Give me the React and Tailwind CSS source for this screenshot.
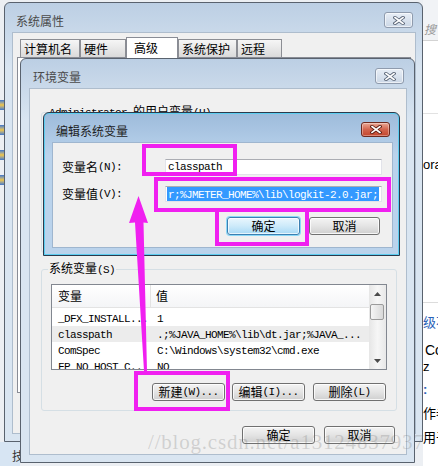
import React from 'react';

const Mono = ({ children, className = '' }) => (
  <span className={`font-['Liberation_Mono',monospace] text-[11px] tracking-[-0.6px] ${className}`}>{children}</span>
);

const CloseBtn = ({ active }) => (
  <div
    className={
      active
        ? 'flex h-[15px] w-[29px] items-center justify-center rounded-[3px] border border-[#6e2a1f] bg-linear-to-b from-[#e9a896] via-[#d2644d] to-[#c4452c] shadow-[inset_0_0_0_1px_rgba(255,255,255,0.35)]'
        : 'flex h-[16px] w-[29px] items-center justify-center rounded-[3px] border border-[#8f9bad] bg-linear-to-b from-[#e8eef6] to-[#cbd7e6] shadow-[inset_0_0_0_1px_rgba(255,255,255,0.6)]'
    }
  >
    <svg width="12" height="9" viewBox="0 0 12 9">
      <path d="M2 1.5 L10 7.5 M10 1.5 L2 7.5" stroke={active ? '#5a1a10' : '#5b6678'} strokeWidth="3.4" strokeLinecap="square" />
      <path d="M2 1.5 L10 7.5 M10 1.5 L2 7.5" stroke="#ffffff" strokeWidth="1.6" strokeLinecap="square" />
    </svg>
  </div>
);

const Btn = ({ children, className = '', primary }) => (
  <div
    className={`flex h-[18px] items-center justify-center rounded-[3px] border text-[12px] leading-none ${
      primary
        ? 'border-[#3c7fb1] bg-linear-to-b from-[#eaf6fd] via-[#cdeafa] to-[#a7d9f5] shadow-[0_0_0_1px_#8ad8f8,inset_0_0_0_1px_rgba(255,255,255,0.7)]'
        : 'border-[#707070] bg-linear-to-b from-[#f4f4f4] via-[#e4e4e4] to-[#cfcfcf] shadow-[inset_0_0_0_1px_rgba(255,255,255,0.8)]'
    } ${className}`}
  >
    {children}
  </div>
);

const Tab = ({ label, w, active }) => (
  <div
    className={
      active
        ? `relative z-10 -mb-px flex h-[21px] ${w} items-center border border-b-0 border-[#898c95] bg-white pl-[7px] pb-[1px]`
        : `flex h-[18px] ${w} items-center border border-b-0 border-[#8c8e94] bg-linear-to-b from-[#f6f6f6] to-[#dadada] pl-[3px]`
    }
  >
    {label}
  </div>
);

const rows = [
  ['_DFX_INSTALL...', '1', false],
  ['classpath', '.;%JAVA_HOME%\\lib\\dt.jar;%JAVA_...', true],
  ['ComSpec', 'C:\\Windows\\system32\\cmd.exe', false],
  ['FP_NO_HOST_C...', 'NO', false],
];

const Arrow = ({ up }) => (
  <svg width="7" height="4" viewBox="0 0 7 4">
    <path d={up ? 'M0 4 L3.5 0 L7 4 Z' : 'M0 0 L3.5 4 L7 0 Z'} fill="#4a4a4a" />
  </svg>
);

export default function App() {
  return (
    <div className="relative h-[466px] w-[438px] overflow-hidden bg-[#eceff3] font-['Noto_Sans_CJK_SC',sans-serif] text-[12px] text-black">
      {/* desktop leftovers */}
      <div className="absolute left-0 top-[100px] flex flex-col gap-[15px]">
        {[0, 1, 2, 3].map((i) => (
          <div key={i} className="h-[10px] w-[4px] bg-linear-to-b from-[#3f74c8] via-[#f0c53a] to-[#3f74c8]" />
        ))}
      </div>
      <div className="absolute left-0 top-[442px] h-[24px] w-[20px] bg-[#d7e5f3] pl-[12px] pt-[8px] text-[12px] leading-[12px] text-[#333]">技</div>

      {/* browser page on the right */}
      <div className="absolute left-[423px] top-0 flex h-full w-[15px] flex-col overflow-hidden bg-white font-['Liberation_Sans','Noto_Sans_CJK_SC',sans-serif] text-[13px] leading-[14px] whitespace-nowrap">
        <div className="h-[40px] shrink-0 bg-[#f1f3f6] pl-[1px] pt-[24px] text-[12px] italic leading-[13px] text-[#9a9a9a]">搜</div>
        <div className="h-px shrink-0 bg-[#d3d3d3]" />
        <div className="mt-[72px] h-px shrink-0 bg-[#e2e2e2]" />
        <div className="mt-[44px] shrink-0">ora</div>
        <div className="mt-[130px] h-px shrink-0 bg-[#dcdcdc]" />
        <div className="mt-[13px] shrink-0 text-[#2a62b8]">级不</div>
        <div className="mt-[13px] shrink-0 pl-[2px] text-[14px]">Co</div>
        <div className="mt-[3px] shrink-0">z</div>
        <div className="mt-[9px] shrink-0 font-bold text-[#2a62b8]">:</div>
        <div className="mt-[10px] shrink-0">作者</div>
        <div className="mt-[10px] shrink-0">用于</div>
      </div>

      {/* 系统属性 */}
      <div className="absolute left-[4px] top-[2px] flex h-[440px] w-[419px] flex-col rounded-t-[6px] border border-[#59626e] bg-linear-to-b from-[#bccfe4] to-[#d9e5f1] to-15%">
        <div className="flex h-[29px] shrink-0 items-start justify-between pl-[11px] pr-[9px]">
          <span className="mt-[10px] leading-[16px] text-[#4a4a4a]">系统属性</span>
          <div className="mt-[9px]"><CloseBtn /></div>
        </div>
        <div className="mb-[7px] ml-[7px] mr-[6px] flex flex-1 flex-col border border-[#aebdcd] bg-[#f0f0f0]">
          <div className="flex items-end pl-[7px] pt-[4px]">
            <Tab label="计算机名" w="w-[60px]" />
            <Tab label="硬件" w="w-[46px]" />
            <Tab label="高级" w="w-[52px]" active />
            <Tab label="系统保护" w="w-[59px]" />
            <Tab label="远程" w="w-[45px]" />
          </div>
          <div className="mx-[4px] mb-[40px] flex-1 border border-[#898c95] bg-white" />
        </div>
      </div>

      {/* 环境变量 */}
      <div className="absolute left-[20px] top-[58px] flex h-[405px] w-[395px] flex-col rounded-t-[6px] border border-[#59626e] bg-linear-to-b from-[#bccfe4] to-[#d9e5f1] to-15%">
        <div className="flex h-[29px] shrink-0 items-start justify-between pl-[12px] pr-[10px]">
          <span className="mt-[10px] leading-[16px] text-[#4a4a4a]">环境变量</span>
          <div className="mt-[9px]"><CloseBtn /></div>
        </div>
        <div className="mb-[7px] ml-[8px] mr-[7px] flex flex-1 flex-col border border-[#aebdcd] bg-[#f0f0f0] px-[10px]">
          <fieldset className="ml-px mt-[15px] h-[149px] rounded-[3px] border border-[#d5dfe5] px-[9px]">
            <legend className="-ml-[3px] px-[1px] leading-[14px]">
              <Mono>Administrator </Mono>的用户变量<Mono>(U)</Mono>
            </legend>
          </fieldset>
          <fieldset className="ml-px mt-[8px] h-[150px] rounded-[3px] border border-[#d5dfe5] px-[9px] pt-[7px]">
            <legend className="-ml-[3px] px-[1px] leading-[14px]">
              系统变量<Mono>(S)</Mono>
            </legend>
            <div className="flex h-[86px] w-[336px] overflow-hidden border border-[#828790] bg-white">
              <div className="flex flex-1 flex-col">
                <div className="flex h-[23px] shrink-0 border-b border-[#e3e3e3] bg-linear-to-b from-white to-[#f4f5f7]">
                  <div className="flex w-[99px] items-center border-r border-[#e3e3e3] pl-[6px]">变量</div>
                  <div className="flex items-center pl-[5px]">值</div>
                </div>
                <div className="mt-[2px] flex flex-col">
                  {rows.map(([n, v, sel]) => (
                    <div key={n} className={`flex h-[16px] shrink-0 items-center whitespace-nowrap ${sel ? 'bg-[#ececec]' : ''}`}>
                      <div className="w-[99px] pl-[6px]"><Mono>{n}</Mono></div>
                      <div className="pl-[6px]"><Mono>{v}</Mono></div>
                    </div>
                  ))}
                </div>
              </div>
              <div className="flex w-[17px] flex-col bg-linear-to-r from-[#e6e6e6] via-[#f6f6f6] to-[#e8e8e8]">
                <div className="flex h-[17px] items-center justify-center"><Arrow up /></div>
                <div className="ml-px mr-[2px] mt-[2px] h-[16px] rounded-[2px] border border-[#9b9b9b] bg-linear-to-r from-[#f5f5f5] to-[#d9d9d9]" />
                <div className="flex-1" />
                <div className="flex h-[17px] items-center justify-center"><Arrow /></div>
              </div>
            </div>
            <div className="mt-[13px] flex w-[335px] justify-end gap-[7px]">
              <Btn className="w-[73px]">新建<Mono>(W)...</Mono></Btn>
              <Btn className="w-[73px]">编辑<Mono>(I)...</Mono></Btn>
              <Btn className="ml-px w-[73px]">删除<Mono>(L)</Mono></Btn>
            </div>
          </fieldset>
          <div className="mt-[15px] flex justify-end gap-[9px] pr-px">
            <Btn className="w-[73px]">确定</Btn>
            <Btn className="w-[71px]">取消</Btn>
          </div>
        </div>
      </div>

      {/* 编辑系统变量 */}
      <div className="absolute left-[43px] top-[112px] flex h-[144px] w-[357px] flex-col rounded-t-[6px] border border-[#2b3a4d] bg-linear-to-b from-[#9dbbdb] to-[#bad3ec] to-30% shadow-[inset_0_0_0_1px_#5ccdf0]">
        <div className="flex h-[29px] shrink-0 items-start justify-between pl-[12px] pr-[9px]">
          <span className="mt-[10px] leading-[16px] text-[#1e1e1e]">编辑系统变量</span>
          <div className="mt-[9px]"><CloseBtn active /></div>
        </div>
        <div className="mb-[7px] ml-[8px] mr-[6px] flex flex-1 flex-col border border-[#9fb6cf] bg-[#f0f0f0]">
          <div className="grid grid-cols-[103px_217px] gap-y-[11px] pl-[9px] pt-[16px]">
            <div className="flex items-center leading-[16px]">变量名<Mono>(N):</Mono></div>
            <div className="flex h-[16px] items-center border border-[#e2e3ea] border-t-[#abadb3] bg-white px-[2px]">
              <Mono>classpath</Mono>
            </div>
            <div className="flex items-center leading-[16px]">变量值<Mono>(V):</Mono></div>
            <div className="flex h-[16px] items-center overflow-hidden border border-[#e2e3ea] border-t-[#abadb3] bg-white px-[1px]">
              <span className="whitespace-nowrap bg-[#3399ff] px-px leading-[13px] text-white">
                <Mono>r;%JMETER_HOME%\lib\logkit-2.0.jar;</Mono>
              </span>
            </div>
          </div>
          <div className="mt-[15px] flex justify-end gap-[9px] pr-[12px]">
            <Btn primary className="w-[73px]">确定</Btn>
            <Btn className="w-[71px]">取消</Btn>
          </div>
        </div>
      </div>

      {/* watermark */}
      <div className="absolute left-[148px] top-[432px] z-40 whitespace-nowrap font-['Liberation_Serif',serif] text-[21px] leading-[21px] tracking-[0.8px] text-[rgba(110,110,110,0.25)]">
        //blog.csdn.net/a13124837937
      </div>

      {/* annotations */}
      <svg className="pointer-events-none absolute inset-0 z-50" width="438" height="466" viewBox="0 0 438 466">
        <g fill="none" stroke="#f020f0" strokeWidth="4">
          <rect x="144" y="146" width="91" height="28" />
          <rect x="156" y="179" width="233" height="31" />
          <rect x="217" y="210" width="90" height="34" />
          <rect x="136" y="373" width="92" height="36" />
        </g>
        <path d="M138.5 196 L129 223 L135 222.5 L144 371 L147 371 L143.5 222.5 L148 223 Z" fill="#f020f0" />
      </svg>
    </div>
  );
}
